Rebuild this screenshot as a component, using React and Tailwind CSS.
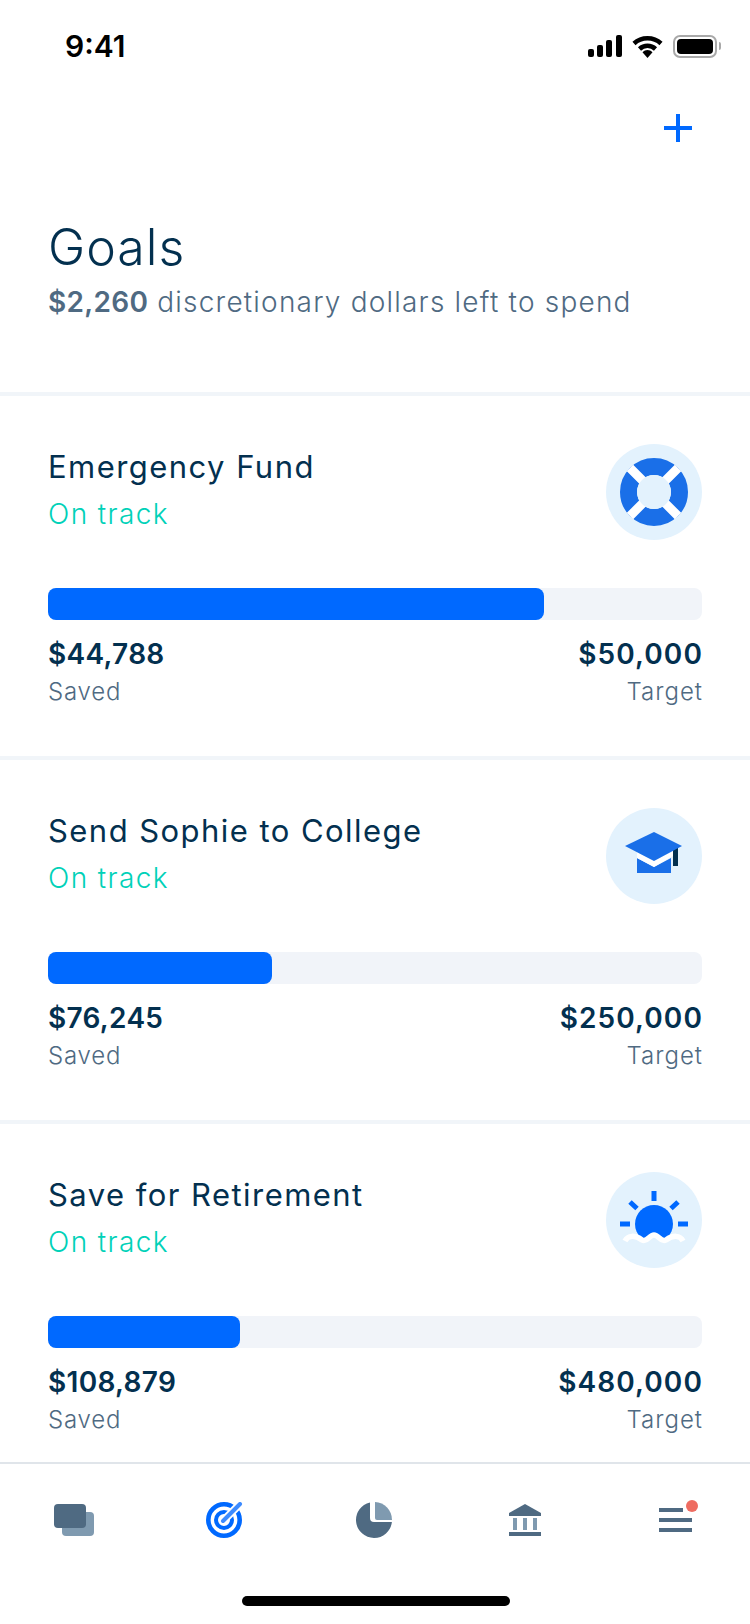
import React from 'react'

const font = "font-['Inter','Noto_Sans',sans-serif]"

const goals = [
  { name: 'Emergency Fund', saved: '$44,788', target: '$50,000', bar: 'w-[496px]', icon: <LifeRing /> },
  { name: 'Send Sophie to College', saved: '$76,245', target: '$250,000', bar: 'w-[224px]', icon: <GradCap /> },
  { name: 'Save for Retirement', saved: '$108,879', target: '$480,000', bar: 'w-[192px]', icon: <Sunset /> },
]

function LifeRing() {
  return (
    <svg width="96" height="96" viewBox="0 0 96 96">
      <circle cx="48" cy="48" r="25.5" fill="none" stroke="#1a6fe8" strokeWidth="17" />
      <path d="M24 24L72 72M72 24L24 72" stroke="#fff" strokeWidth="9" />
      <circle cx="48" cy="48" r="17" fill="#e3f2fd" />
    </svg>
  )
}

function GradCap() {
  return (
    <svg width="96" height="96" viewBox="0 0 96 96">
      <path d="M31 50L48 59L65 50V65H31Z" fill="#1a6fe8" />
      <path d="M31 44L48 53L67 43V48L48 59L31 50Z" fill="#fff" />
      <path d="M67 40L72 38V58H67Z" fill="#03304f" />
      <path d="M19 38L48 24L76 38L48 53Z" fill="#1a6fe8" />
    </svg>
  )
}

function Sunset() {
  return (
    <svg width="96" height="96" viewBox="0 0 96 96">
      <path d="M48 19V29M14 52H24M72 52H82M24 30L31 36.5M72 30L65 36.5" stroke="#0069ff" strokeWidth="5" fill="none" />
      <circle cx="48" cy="52" r="19" fill="#0069ff" />
      <path d="M19 69C22 63 29 63 36 68C41 71 43 63 48 63C53 63 55 71 60 68C67 63 74 63 77 69V80H19Z" fill="#e3f2fd" />
      <path d="M19 69C22 63 29 63 36 68C41 71 43 63 48 63C53 63 55 71 60 68C67 63 74 63 77 69" stroke="#fff" strokeWidth="5.5" fill="none" />
    </svg>
  )
}

function Signal() {
  return (
    <svg width="34" height="22" viewBox="0 0 34 22">
      <rect x="0" y="14" width="6" height="8" rx="2" />
      <rect x="9" y="10" width="6" height="12" rx="2" />
      <rect x="18" y="5" width="6" height="17" rx="2" />
      <rect x="28" y="0" width="6" height="22" rx="2" />
    </svg>
  )
}

function Wifi() {
  return (
    <svg width="31" height="23" viewBox="0 0 31 23">
      <path d="M2 8.5C9.5 1.5 21.5 1.5 29 8.5" fill="none" stroke="#000" strokeWidth="4.5" />
      <path d="M7.5 14C12 9.8 19 9.8 23.5 14" fill="none" stroke="#000" strokeWidth="4.5" />
      <path d="M10.5 17.2C13.5 14.2 17.5 14.2 20.5 17.2L15.5 23Z" />
    </svg>
  )
}

function Battery() {
  return (
    <div className="flex items-center gap-[2px]">
      <div className="w-[44px] h-[23px] rounded-[7px] border-2 border-[#a9a9a9] p-[2px]">
        <div className="w-full h-full rounded-[4px] bg-black" />
      </div>
      <div className="w-[2px] h-[8px] rounded-r-sm bg-[#a9a9a9]" />
    </div>
  )
}

function TabCards() {
  return (
    <svg width="42" height="32" viewBox="0 0 42 32">
      <rect x="8" y="8" width="32" height="24" rx="4" fill="#7f9ab0" />
      <rect x="0" y="0" width="32" height="24" rx="4" fill="#4f6a82" />
    </svg>
  )
}

function TabTarget() {
  return (
    <svg width="38" height="36" viewBox="0 0 38 36">
      <circle cx="18" cy="18" r="15.7" fill="none" stroke="#0069ff" strokeWidth="4.6" />
      <circle cx="18" cy="18" r="8" fill="none" stroke="#0069ff" strokeWidth="4" />
      <path d="M17 19L35 1" stroke="#fff" strokeWidth="8" />
      <path d="M17 19L34 2" stroke="#3d8bff" strokeWidth="4" strokeLinecap="round" />
    </svg>
  )
}

function TabPie() {
  return (
    <svg width="38" height="36" viewBox="0 0 38 36">
      <path d="M14 0.4A18 18 0 1 0 35.9 20H18Q14 20 14 16Z" fill="#4f6a82" />
      <path d="M19 0A18 18 0 0 1 36 18H21Q19 18 19 16Z" fill="#7f9ab0" />
    </svg>
  )
}

function TabBank() {
  return (
    <svg width="32" height="32" viewBox="0 0 32 32">
      <path d="M0 9L16 0L32 9V12H0Z" fill="#4f6a82" />
      <path d="M4 14H8V26H4ZM14 14H18V26H14ZM24 14H28V26H24Z" fill="#7f9ab0" />
      <rect x="0" y="28" width="32" height="4" fill="#4f6a82" />
    </svg>
  )
}

function TabMenu() {
  return (
    <svg width="48" height="40" viewBox="0 0 48 40">
      <path d="M8 8H32V12H8ZM8 18H41V22H8ZM8 28H41V32H8Z" fill="#4f6a82" />
      <circle cx="41" cy="6" r="6" fill="#ee6c61" />
    </svg>
  )
}

function GoalCard({ goal }) {
  return (
    <section className="border-t-4 border-[#f1f5f9] px-12 pt-12 pb-12">
      <div className="flex justify-between items-start">
        <div className="pt-[3px]">
          <h2 className="text-[31px] leading-[40px] font-normal tracking-[1.45px] text-[#03304f]">{goal.name}</h2>
          <p className="mt-[7px] text-[28px] leading-[40px] font-light tracking-[1.4px] text-[#00d1b8]">On track</p>
        </div>
        <div className="w-24 h-24 rounded-full bg-[#e3f2fd]">{goal.icon}</div>
      </div>
      <div className="mt-12 h-8 rounded-lg bg-[#f1f4f9]">
        <div className={`h-8 rounded-lg bg-[#0069ff] ${goal.bar}`} />
      </div>
      <div className="mt-4 flex justify-between">
        <div>
          <p className="text-[28px] leading-9 font-semibold tracking-[0.3px] text-[#03304f]">{goal.saved}</p>
          <p className="mt-1 text-[24px] leading-8 font-light tracking-[0.8px] text-[#4f6a82]">Saved</p>
        </div>
        <div className="text-right -mr-px">
          <p className="text-[28px] leading-9 font-semibold tracking-[1.1px] text-[#03304f]">{goal.target}</p>
          <p className="mt-1 text-[24px] leading-8 font-light tracking-[1px] text-[#4f6a82]">Target</p>
        </div>
      </div>
    </section>
  )
}

export default function App() {
  return (
    <div className={`w-[750px] h-[1624px] flex flex-col overflow-hidden bg-white ${font}`}>
      <header className="h-[392px] shrink-0">
        <div className="flex justify-between items-center pt-[34px] pl-[65px] pr-[29px] h-[58px]">
          <span className="text-[30px] leading-6 font-semibold text-black">9:41</span>
          <div className="flex items-center gap-[10px]">
            <Signal />
            <Wifi />
            <Battery />
          </div>
        </div>
        <div className="flex justify-end pr-[58px] pt-[56px]">
          <svg width="28" height="28" viewBox="0 0 28 28">
            <path d="M14 0V28M0 14H28" stroke="#0069ff" strokeWidth="4" />
          </svg>
        </div>
        <h1 className="ml-12 mt-[75px] text-[50px] leading-[60px] font-light tracking-[1px] text-[#03304f]">Goals</h1>
        <p className="ml-12 mt-[5px] text-[28px] leading-[40px] font-light tracking-[1.2px] text-[#4f6a82]">
          <span className="font-semibold tracking-[0.3px]">$2,260</span> discretionary dollars left to spend
        </p>
      </header>
      <main className="flex-1 overflow-hidden">
        {goals.map((goal) => (
          <GoalCard key={goal.name} goal={goal} />
        ))}
      </main>
      <nav className="shrink-0 h-[162px] border-t-2 border-[#e0e5ea]">
        <div className="grid grid-cols-5 items-center justify-items-center h-10 mt-9">
          <TabCards />
          <TabTarget />
          <TabPie />
          <TabBank />
          <TabMenu />
        </div>
        <div className="mt-14 ml-[242px] w-[268px] h-[10px] rounded-full bg-black" />
      </nav>
    </div>
  )
}
